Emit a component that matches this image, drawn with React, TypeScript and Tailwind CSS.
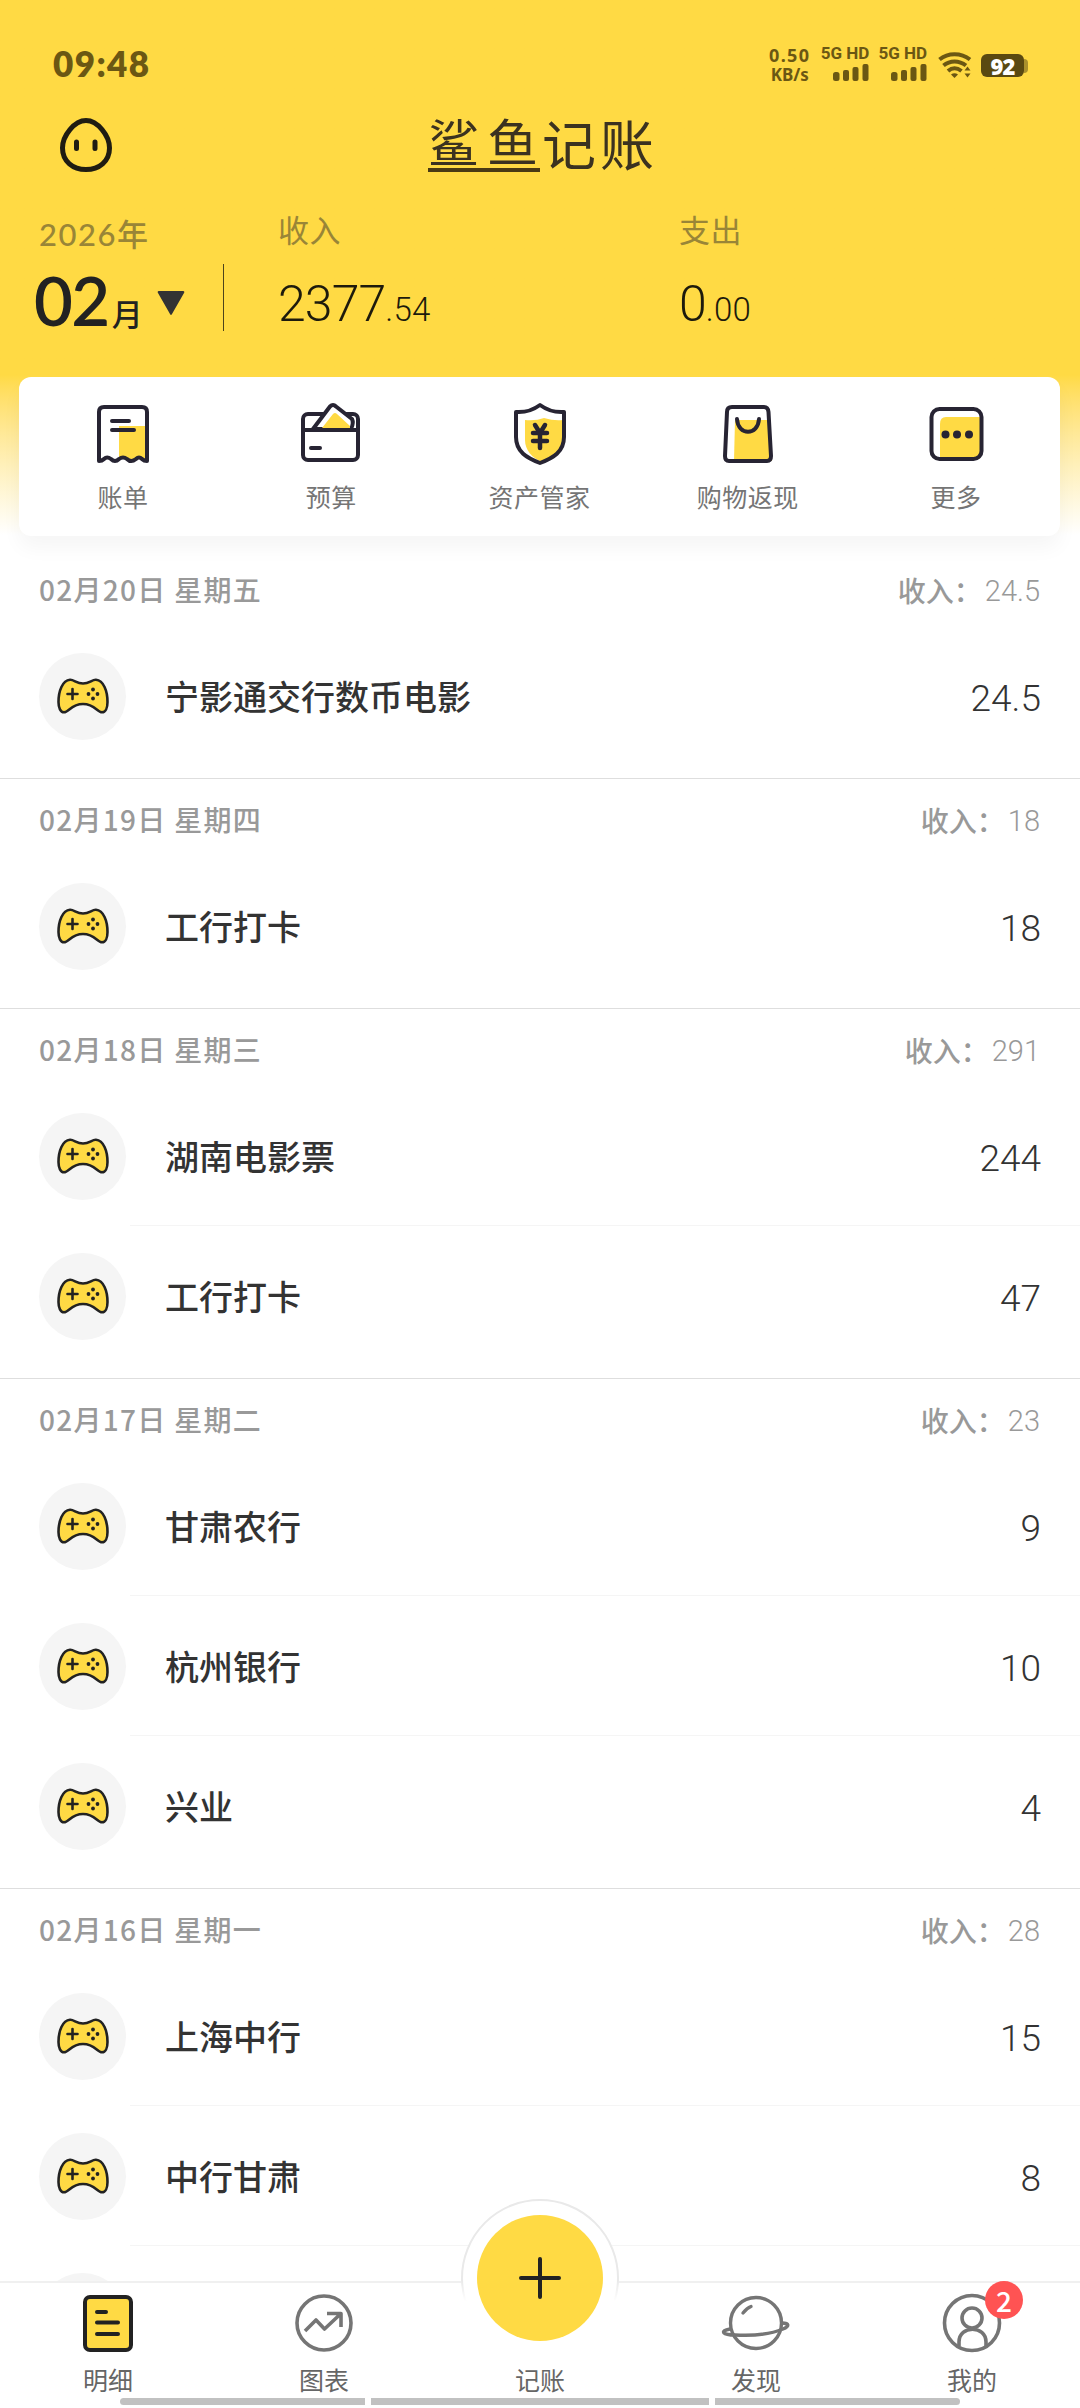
/**
 * Bookkeeping home screen: month summary, shortcuts and daily records.
 */

import type { ReactNode } from 'react';

interface Day {
  date: string;
  total: string;
  items: { name: string; amount: string }[];
}

const days: Day[] = [
  { date: '02月20日 星期五', total: '24.5', items: [{ name: '宁影通交行数币电影', amount: '24.5' }] },
  { date: '02月19日 星期四', total: '18', items: [{ name: '工行打卡', amount: '18' }] },
  {
    date: '02月18日 星期三',
    total: '291',
    items: [
      { name: '湖南电影票', amount: '244' },
      { name: '工行打卡', amount: '47' },
    ],
  },
  {
    date: '02月17日 星期二',
    total: '23',
    items: [
      { name: '甘肃农行', amount: '9' },
      { name: '杭州银行', amount: '10' },
      { name: '兴业', amount: '4' },
    ],
  },
  {
    date: '02月16日 星期一',
    total: '28',
    items: [
      { name: '上海中行', amount: '15' },
      { name: '中行甘肃', amount: '8' },
      { name: '', amount: '' },
    ],
  },
];

function Signal() {
  return (
    <div className="flex flex-col items-end gap-[4px]">
      <span className="text-[17px] leading-[14px] font-bold whitespace-nowrap">5G HD</span>
      <svg width="36" height="17" viewBox="0 0 36 17" fill="currentColor">
        <rect x="0" y="8" width="6.5" height="9" rx="2.5" />
        <rect x="10" y="6" width="6" height="11" rx="2" />
        <rect x="19.500" y="3" width="6" height="14" rx="2" />
        <rect x="29.500" y="0" width="6" height="17" rx="2" />
      </svg>
    </div>
  );
}

function StatusBar() {
  return (
    <div className="flex h-[100px] items-start justify-between pt-[46px] pr-[52px] pl-[53px] font-['Lato',sans-serif] text-[#6b5713]">
      <span className="text-[35px] leading-[34px] font-extrabold tracking-[1.4px]">09:48</span>
      <div className="flex items-start">
        <div className="mt-[2px] mr-[8px] flex w-[46px] flex-col items-center font-['Noto_Sans',sans-serif] font-bold">
          <span className="text-[18px] leading-[15px] tracking-[1.4px]">0.50</span>
          <span className="mt-[4px] text-[17px] leading-[16px]">KB/s</span>
        </div>
        <div className="flex gap-[9px] font-['Roboto',sans-serif]">
          <Signal />
          <Signal />
        </div>
        <svg className="mt-[6px] ml-[11px]" width="34" height="27" viewBox="0 0 34 27" fill="none" stroke="currentColor" strokeWidth="4">
          <path d="M1.500 7.500C10 .5 23 .5 32 7.500" />
          <path d="M5.500 13.500C12 8 21 8 28 13.500" />
          <path d="M10 19C14 15.500 19 15.500 23.500 19" />
          <path d="M13 22.500Q16.500 20 20 22.500L16.500 26Z" fill="currentColor" stroke="none" />
          <path d="M26.500 18.500 29.500 14.500 32.500 18.500ZM26.500 21.500 29.500 25.500 32.500 21.500Z" fill="currentColor" stroke="none" />
        </svg>
        <div className="mt-[8px] ml-[9px] flex items-center">
          <div className="flex h-[23px] w-[43px] items-center justify-center rounded-[6px] bg-[#5a4911] font-['Open_Sans',sans-serif] text-[22px] leading-none font-extrabold tracking-[-1px] text-white">
            92
          </div>
          <div className="h-[14px] w-[4px] rounded-r-[4px] bg-[#ab912c]" />
        </div>
      </div>
    </div>
  );
}

function TitleBar() {
  return (
    <div className="flex h-[100px] items-start pl-[59px]">
      <svg className="mt-[17px]" width="54" height="56" viewBox="0 0 54 56" fill="none" stroke="#1f1c12" strokeWidth="5">
        <path d="M27 3.500C38.500 3.500 50.500 18.500 50.500 31C50.500 44.500 40 52.500 27 52.500S3.500 44.500 3.500 31C3.500 18.500 15.500 3.500 27 3.500Z" />
        <path d="M17.500 25V31.500M36 25V31.500" strokeLinecap="round" />
      </svg>
      <h1 className="mt-[15px] ml-[315px] flex text-[54px] leading-[54px] font-normal tracking-[4px] whitespace-nowrap text-[#3b3220]">
        <span className="h-[57px] w-[112px] border-b-4 border-[#4a3a14] text-[51px] leading-[50px] tracking-[8px]">鲨鱼</span>
        <span className="ml-[2px] leading-[56px]">记账</span>
      </h1>
    </div>
  );
}

function Amount({ label, whole, cents }: { label: string; whole: string; cents: string }) {
  return (
    <div className="w-[401px]">
      <div className="h-[58px] text-[31px] leading-[58px] tracking-[0.6px] text-[#998537]">{label}</div>
      <div className="mt-[16px] font-['Roboto',sans-serif] leading-[60px] font-light text-[#1d1a0c]">
        <span className="text-[50px] tracking-[-0.9px]">{whole}</span>
        <span className="text-[33px] tracking-[0.2px]">{cents}</span>
      </div>
    </div>
  );
}

function Summary() {
  return (
    <div className="flex h-[177px]">
      <div className="w-[224px] pl-[39px]">
        <div className="mt-[4px] font-['Lato','Noto_Sans_CJK_SC',sans-serif] text-[31px] leading-[60px] font-medium tracking-[1.5px] text-[#998537]">
          2026年
        </div>
        <div className="-mt-[2px] -ml-[5px] flex items-baseline text-[#222]">
          <span className="font-['Lato',sans-serif] text-[67px] leading-[76px] font-semibold tracking-[-1.5px]">02</span>
          <span className="ml-[3px] text-[31px] leading-[60px] font-medium">月</span>
          <svg className="ml-[14px] self-center" width="28" height="24" viewBox="0 0 28 24">
            <path d="M2 0H26Q28 0 27 2L15 23Q14 25 13 23L1 2Q0 0 2 0Z" fill="#333" />
          </svg>
        </div>
      </div>
      <div className="mt-[64px] h-[67px] w-px bg-[#4d431c]" />
      <div className="ml-[54px] flex">
        <Amount label="收入" whole="2377" cents=".54" />
        <Amount label="支出" whole="0" cents=".00" />
      </div>
    </div>
  );
}

function BillIcon() {
  return (
    <svg width="64" height="64" viewBox="0 0 64 64" fill="none" stroke="#272433" strokeWidth="4" strokeLinecap="round" strokeLinejoin="round">
      <path d="M28 24H55V58L48 55L40 58L34 55L28 58Z" fill="#ffda44" stroke="none" />
      <path d="M8 59V10Q8 5 13 5H51Q56 5 56 10V59Q53 59 51 57Q48 54 45 57Q40 61 36 57Q32 54 28 57Q24 61 20 57Q16 54 13 57Q11 59 8 59Z" />
      <path d="M21 19H38M21 28H43" />
    </svg>
  );
}

function BudgetIcon() {
  return (
    <svg width="64" height="64" viewBox="0 0 64 64" fill="none" stroke="#272433" strokeWidth="4" strokeLinecap="round" strokeLinejoin="round">
      <rect x="4" y="12" width="55" height="46" rx="5" />
      <path d="M14 27 31 4.500Q34 1.500 37 4.500L53 17Q55 21 52 27Z" fill="#fff" />
      <path d="M23 26 34 12Q36 10 38 12L51 24V26Z" fill="#ffda44" stroke="none" />
      <path d="M4 28H59M12 46H21" />
    </svg>
  );
}

function AssetIcon() {
  return (
    <svg width="64" height="64" viewBox="0 0 64 64" fill="none" stroke="#272433" strokeWidth="4" strokeLinecap="round" strokeLinejoin="round">
      <path d="M17 18Q28 19 36 16Q46 19 55 18V36C55 50 46 55 34 60C24 56 17 48 17 38Z" fill="#ffda44" stroke="none" />
      <path d="M32 3Q43 11 56 10V35C56 50 45 56 32 61C19 56 8 50 8 35V10Q21 11 32 3Z" />
      <path d="M27 23 32 31 37 23M25 31H39M25 39H39M32 31V46" strokeWidth="4.500" />
    </svg>
  );
}

function BagIcon() {
  return (
    <svg width="64" height="64" viewBox="0 0 64 64" fill="none" stroke="#272433" strokeWidth="4" strokeLinecap="round" strokeLinejoin="round">
      <path d="M19 18H54L56 59H18Z" fill="#ffda44" stroke="none" />
      <path d="M16 5H48Q52 5 52.500 10L55 54Q55 59 51 59H13Q9 59 9 54L11 10Q11 5 16 5Z" />
      <path d="M21 17C22 34 42 34 43 17" />
    </svg>
  );
}

function MoreIcon() {
  return (
    <svg width="64" height="64" viewBox="0 0 64 64" fill="none" stroke="#272433" strokeWidth="4">
      <path d="M16 22Q16 15 22 15H56V57H16Z" fill="#ffda44" stroke="none" />
      <rect x="7.500" y="7" width="50" height="50" rx="8" />
      <g fill="#272433" stroke="none">
        <circle cx="21.500" cy="32.500" r="4" />
        <circle cx="33" cy="32.500" r="4" />
        <circle cx="45" cy="32.500" r="4" />
      </g>
    </svg>
  );
}

const shortcuts: { label: string; icon: ReactNode }[] = [
  { label: '账单', icon: <BillIcon /> },
  { label: '预算', icon: <BudgetIcon /> },
  { label: '资产管家', icon: <AssetIcon /> },
  { label: '购物返现', icon: <BagIcon /> },
  { label: '更多', icon: <MoreIcon /> },
];

function Shortcuts() {
  return (
    <div className="mr-[20px] ml-[19px] flex h-[159px] rounded-[12px] bg-white shadow-[0_12px_20px_rgba(0,0,0,0.04)]">
      {shortcuts.map((s) => (
        <div key={s.label} className="flex flex-1 flex-col items-center pt-[25px] text-[25px] leading-[30px] tracking-[0.5px] text-[#757575]">
          {s.icon}
          <span className="mt-[15px]">{s.label}</span>
        </div>
      ))}
    </div>
  );
}

function Gamepad() {
  return (
    <svg width="52" height="36" viewBox="0 0 52 36" fill="none" stroke="#222" strokeWidth="2.600" strokeLinecap="round" strokeLinejoin="round">
      <path
        d="M13 1.800C17 1.500 19.500 5.500 26 5.500S35 1.500 39 1.800C46.500 2.500 50.500 13 50.500 24C50.500 30 48.500 34.300 45 34.300C40 34.300 38 26 26 26S12 34.300 7 34.300C3.500 34.300 1.500 30 1.500 24C1.500 13 5.500 2.500 13 1.800Z"
        fill="#ffda44"
      />
      <path d="M15.500 11V21M10.500 16H20.500" />
      <g fill="#222" stroke="none">
        <circle cx="36" cy="11.500" r="1.900" />
        <circle cx="36" cy="20.500" r="1.900" />
        <circle cx="31.500" cy="16" r="1.900" />
        <circle cx="40.500" cy="16" r="1.900" />
      </g>
    </svg>
  );
}

function DaySection({ day }: { day: Day }) {
  return (
    <section className="shrink-0 border-b border-[#dedede] pb-[12px]">
      <div className="flex h-[77px] items-center justify-between pt-[3px] pr-[40px] pl-[39px] text-[28px] font-medium text-[#999]">
        <span className="tracking-[1.3px]">{day.date}</span>
        <span className="mt-[2px] flex items-center">
          收入：
          <span className="mt-[3px] ml-[3px] font-['Roboto',sans-serif] text-[29px] font-light">{day.total}</span>
        </span>
      </div>
      {day.items.map((item, i) => (
        <div key={i} className="flex h-[140px] items-center pl-[39px]">
          <div className="flex size-[87px] shrink-0 items-center justify-center rounded-full bg-[#f5f5f5]">
            <Gamepad />
          </div>
          <div
            className={`ml-[4px] flex h-full flex-1 items-center justify-between border-b pr-[39px] pl-[35px] ${
              i < day.items.length - 1 ? 'border-[#f5f5f5]' : 'border-transparent'
            }`}
          >
            <span className="text-[34px] font-medium text-[#333]">{item.name}</span>
            <span className="mt-[7px] font-['Roboto',sans-serif] text-[37px] font-light text-[#333]">{item.amount}</span>
          </div>
        </div>
      ))}
    </section>
  );
}

function Tab({ label, children }: { label: string; children?: ReactNode }) {
  return (
    <div className="flex flex-1 flex-col items-center pt-[9px]">
      <div className="relative h-[62px]">{children}</div>
      <span className="mt-[10px] text-[25px] leading-[30px] text-[#666]">{label}</span>
    </div>
  );
}

function TabBar() {
  return (
    <nav className="relative h-[127px] shrink-0 border-t-2 border-[#f0f0f0] bg-white">
      <div className="absolute -top-[84px] left-[461px] h-[102px] w-[158px] overflow-hidden">
        <div className="size-[158px] rounded-full border-2 border-[#e9e9e9] bg-white" />
        <div className="absolute bottom-0 h-[20px] w-full bg-gradient-to-b from-transparent to-white" />
      </div>
      <div className="relative flex h-full">
        <Tab label="明细">
          <svg width="62" height="62" viewBox="0 0 62 62" fill="none" stroke="#222" strokeWidth="4" strokeLinecap="round">
            <rect x="8" y="5" width="46" height="53" rx="5" fill="#ffda44" />
            <path d="M20 20H29M20 30.500H41M20 42H41" />
          </svg>
        </Tab>
        <Tab label="图表">
          <svg width="62" height="62" viewBox="0 0 62 62" fill="none" stroke="#757575" strokeWidth="3.600">
            <circle cx="31" cy="31" r="27" />
            <path d="M12 39 23 28 31.500 37 48 21.500M34 21.500H48V35" strokeLinejoin="round" />
          </svg>
        </Tab>
        <Tab label="记账">
          <div className="absolute -top-[77px] -left-[63px] flex size-[126px] items-center justify-center rounded-full bg-[#ffda44]">
            <svg width="44" height="44" viewBox="0 0 44 44" stroke="#222" strokeWidth="4" strokeLinecap="round">
              <path d="M22 3V41M3 22H41" />
            </svg>
          </div>
        </Tab>
        <Tab label="发现">
          <svg width="70" height="62" viewBox="0 0 70 62" fill="none" stroke="#757575" strokeWidth="3.400" strokeLinecap="round">
            <circle cx="35" cy="31" r="25.500" />
            <path d="M22 21Q26 16 30 14.500" />
            <path d="M9 37C-2 39 2 43 14 43C32 44 50 42 62 37C69 34 68 31 61 31" />
          </svg>
        </Tab>
        <Tab label="我的">
          <svg width="62" height="62" viewBox="0 0 62 62" fill="none" stroke="#757575" strokeWidth="3.600">
            <circle cx="31" cy="31" r="27.500" />
            <circle cx="31" cy="26" r="10" />
            <path d="M18 54V50C18 33 45 33 45 50V54" />
          </svg>
          <span className="absolute -top-[11px] left-[44px] flex size-[38px] items-center justify-center rounded-full bg-[#ff5353] text-[28px] leading-none font-medium text-white">
            2
          </span>
        </Tab>
      </div>
      <div className="absolute bottom-[3px] left-[120px] flex h-[7px] w-[840px] gap-[6px] overflow-hidden rounded-full">
        <div className="w-[245px] bg-[#c1c1c1]" />
        <div className="flex-1 bg-[#c1c1c1]" />
        <div className="w-[245px] bg-[#c1c1c1]" />
      </div>
    </nav>
  );
}

export default function App() {
  return (
    <div className="flex h-[2408px] w-[1080px] flex-col overflow-hidden bg-white font-['Noto_Sans_CJK_SC',sans-serif]">
      <header className="h-[549px] shrink-0 bg-gradient-to-b from-[#ffda44] from-[375px] to-white to-[535px]">
        <StatusBar />
        <TitleBar />
        <Summary />
        <Shortcuts />
      </header>
      <main className="flex min-h-0 flex-1 flex-col overflow-hidden">
        {days.map((day) => (
          <DaySection key={day.date} day={day} />
        ))}
      </main>
      <TabBar />
    </div>
  );
}
